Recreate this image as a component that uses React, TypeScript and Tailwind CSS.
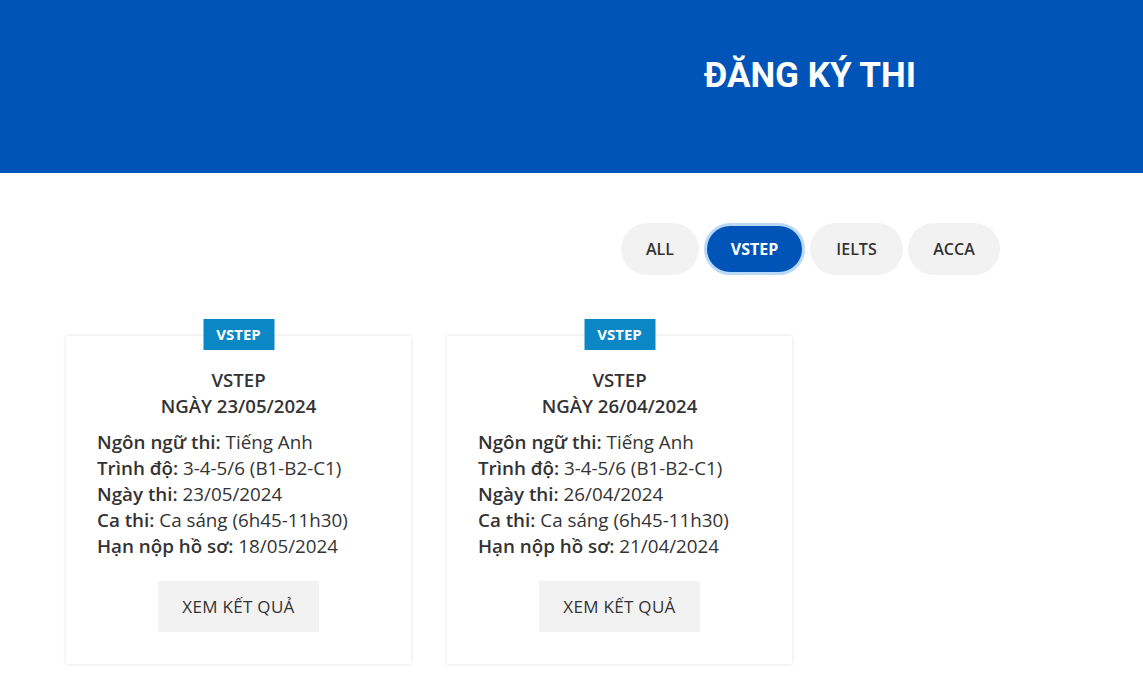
import React from "react";

const cards = [
  { date: "23/05/2024", deadline: "18/05/2024" },
  { date: "26/04/2024", deadline: "21/04/2024" },
];

export default function App() {
  return (
    <div className="min-h-[679px] bg-white" style={{ fontFamily: '"Open Sans", sans-serif' }}>
      <div className="h-[173px] bg-[#0054b8] flex items-center">
        <h1
          className="ml-[704px] text-[35px] font-bold text-white leading-none mt-[-22px]"
          style={{ fontFamily: 'Roboto, sans-serif' }}
        >
          ĐĂNG KÝ THI
        </h1>
      </div>

      <div className="flex gap-[5px] ml-[621px] mt-[50px]">
        <button className="h-[52px] w-[78px] rounded-full bg-[#f2f2f2] text-[16px] font-semibold text-[#333]">ALL</button>
        <button className="h-[52px] w-[101px] rounded-full bg-[#0054b8] text-[16px] font-bold text-white border-[3px] border-[#b9d9f7]">VSTEP</button>
        <button className="h-[52px] w-[93px] rounded-full bg-[#f2f2f2] text-[16px] font-semibold text-[#333]">IELTS</button>
        <button className="h-[52px] w-[92px] rounded-full bg-[#f2f2f2] text-[16px] font-semibold text-[#333]">ACCA</button>
      </div>

      <div className="flex gap-[36px] ml-[66px] mt-[61px]">
        {cards.map((c, i) => (
          <div
            key={i}
            className="relative w-[345px] h-[328px] bg-white shadow-[0_0_4px_rgba(0,0,0,0.12)] flex flex-col items-center pt-[31px]"
          >
            <div className="absolute top-[-17px] left-1/2 -translate-x-1/2 w-[71px] h-[31px] bg-[#0a87c4] text-white text-[15px] font-bold flex items-center justify-center">
              VSTEP
            </div>
            <div className="text-center text-[18.6px] font-semibold text-[#333] leading-[26px]">
              <div>VSTEP</div>
              <div>NGÀY {c.date}</div>
            </div>
            <div className="self-stretch pl-[31px] mt-[10px] text-[18.8px] leading-[26px] text-[#333]">
              <div><span className="font-semibold">Ngôn ngữ thi:</span> Tiếng Anh</div>
              <div><span className="font-semibold">Trình độ:</span> 3-4-5/6 (B1-B2-C1)</div>
              <div><span className="font-semibold">Ngày thi:</span> {c.date}</div>
              <div><span className="font-semibold">Ca thi:</span> Ca sáng (6h45-11h30)</div>
              <div><span className="font-semibold">Hạn nộp hồ sơ:</span> {c.deadline}</div>
            </div>
            <button className="mt-[22px] w-[161px] h-[51px] bg-[#f2f2f2] text-[17px] font-medium text-[#333] tracking-[0.3px]">
              XEM KẾT QUẢ
            </button>
          </div>
        ))}
      </div>
    </div>
  );
}
